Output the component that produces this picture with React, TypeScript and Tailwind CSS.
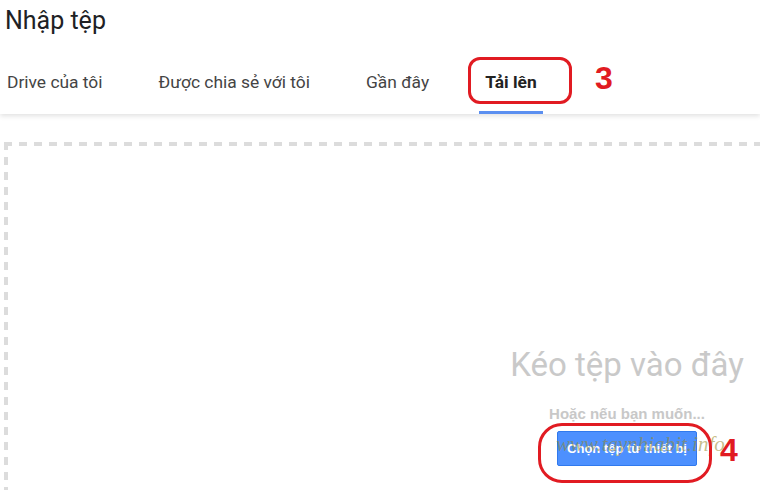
import React from "react";

export default function App() {
  const tabs = ["Drive của tôi", "Được chia sẻ với tôi", "Gần đây", "Tải lên"];
  return (
    <div className="relative w-[760px] h-[490px] overflow-hidden bg-white font-['Roboto','Liberation_Sans',sans-serif]">
      <div className="relative z-10 bg-white shadow-[0_2px_5px_rgba(0,0,0,0.12)]">
        <div className="h-[50px] pl-[5px] pt-[6px] text-[25px] leading-[29px] text-[#202124]">Nhập tệp</div>
        <div className="flex h-[64px] gap-[44px] pl-[1px]">
          {tabs.map((t, i) => (
            <div
              key={t}
              className={
                i === 3
                  ? "flex items-center px-[6px] pt-[4px] border-b-[3px] border-[#5b8ff0] text-[17.4px] font-bold text-[#222]"
                  : "flex items-center px-[6px] pt-[4px] border-b-[3px] border-transparent text-[17.4px] text-[#444]"
              }
            >
              {t}
            </div>
          ))}
        </div>
      </div>

      <div className="mt-[28px] ml-[4px] w-[820px] h-[420px] bg-[linear-gradient(to_right,#dcdcdc_8px,transparent_8px),linear-gradient(to_bottom,#dcdcdc_8px,transparent_8px)] [background-size:15px_4px,4px_15px] [background-repeat:repeat-x,repeat-y] [background-position:0_0,0_0]">
        <div className="ml-[483px] w-[280px] pt-[206px] flex flex-col items-center">
          <div className="text-[33px] leading-[33px] text-[#c9c9c9] whitespace-nowrap">Kéo tệp vào đây</div>
          <div className="mt-[24px] text-[15px] leading-[17px] font-bold text-[#c8c8c8] font-['Liberation_Sans',Arial,sans-serif] whitespace-nowrap">
            Hoặc nếu bạn muốn...
          </div>
          <button className="mt-[9px] w-[140px] h-[35px] rounded-[2px] border border-[#3079ed] bg-[#4d90fe] text-white text-[13px] font-bold font-['Liberation_Sans',Arial,sans-serif] whitespace-nowrap">
            Chọn tệp từ thiết bị
          </button>
        </div>
      </div>

      {/* watermark */}
      <div className="absolute left-[556px] top-[429px] z-20 text-[21px] italic text-[rgba(150,135,40,0.55)] font-['Liberation_Serif',serif] whitespace-nowrap pointer-events-none">
        www.taynhiabit.info
      </div>

      {/* annotations */}
      <div className="absolute left-[468px] top-[57px] z-30 w-[104px] h-[47px] rounded-[12px] border-[3px] border-[#e11b22]" />
      <div className="absolute left-[595px] top-[58px] z-30 text-[32px] leading-[40px] font-bold text-[#e11b22] font-['Liberation_Sans',Arial,sans-serif]">
        3
      </div>
      <div className="absolute left-[538px] top-[423px] z-30 w-[174px] h-[60px] rounded-[24px] border-[3px] border-[#e11b22]" />
      <div className="absolute left-[720px] top-[430px] z-30 text-[32px] leading-[40px] font-bold text-[#e11b22] font-['Liberation_Sans',Arial,sans-serif]">
        4
      </div>
    </div>
  );
}
